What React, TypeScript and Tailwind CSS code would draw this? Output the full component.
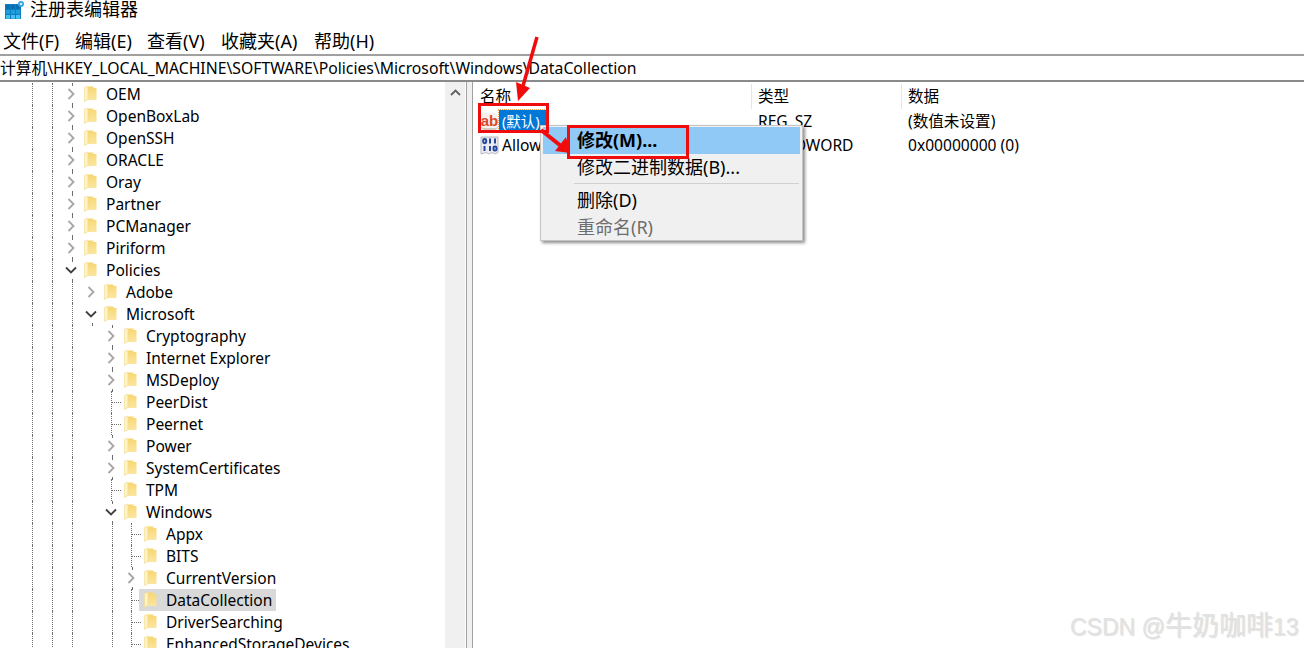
import React from 'react';

type Kind = 'closed' | 'open' | 'leaf';
type Node = { name: string; depth: number; kind: Kind; selected?: boolean };

const font = { fontFamily: '"Noto Sans", "Noto Sans CJK SC", sans-serif' };

const nodes: Node[] = [
  { name: 'OEM', depth: 0, kind: 'closed' },
  { name: 'OpenBoxLab', depth: 0, kind: 'closed' },
  { name: 'OpenSSH', depth: 0, kind: 'closed' },
  { name: 'ORACLE', depth: 0, kind: 'closed' },
  { name: 'Oray', depth: 0, kind: 'closed' },
  { name: 'Partner', depth: 0, kind: 'closed' },
  { name: 'PCManager', depth: 0, kind: 'closed' },
  { name: 'Piriform', depth: 0, kind: 'closed' },
  { name: 'Policies', depth: 0, kind: 'open' },
  { name: 'Adobe', depth: 1, kind: 'closed' },
  { name: 'Microsoft', depth: 1, kind: 'open' },
  { name: 'Cryptography', depth: 2, kind: 'closed' },
  { name: 'Internet Explorer', depth: 2, kind: 'closed' },
  { name: 'MSDeploy', depth: 2, kind: 'closed' },
  { name: 'PeerDist', depth: 2, kind: 'leaf' },
  { name: 'Peernet', depth: 2, kind: 'leaf' },
  { name: 'Power', depth: 2, kind: 'closed' },
  { name: 'SystemCertificates', depth: 2, kind: 'closed' },
  { name: 'TPM', depth: 2, kind: 'leaf' },
  { name: 'Windows', depth: 2, kind: 'open' },
  { name: 'Appx', depth: 3, kind: 'leaf' },
  { name: 'BITS', depth: 3, kind: 'leaf' },
  { name: 'CurrentVersion', depth: 3, kind: 'closed' },
  { name: 'DataCollection', depth: 3, kind: 'leaf', selected: true },
  { name: 'DriverSearching', depth: 3, kind: 'leaf' },
  { name: 'EnhancedStorageDevices', depth: 3, kind: 'leaf' },
];

const Folder = () => (
  <svg width="13" height="18" viewBox="0 0 13 18" className="shrink-0">
    <defs>
      <linearGradient id="fold" x1="0" y1="0" x2="0" y2="1">
        <stop offset="0" stopColor="#f7d672" />
        <stop offset="1" stopColor="#fbe6a2" />
      </linearGradient>
    </defs>
    <path d="M4 1.5h5.5v1.5H12.5v12H4z" fill="url(#fold)" />
    <path d="M0.5 2.5L4 1v13.5L0.5 16.5z" fill="#fdf3c4" stroke="#f2d98c" strokeWidth="0.6" />
  </svg>
);

const Chevron = ({ open }: { open: boolean }) =>
  open ? (
    <svg width="12" height="8" viewBox="0 0 12 8" className="shrink-0 mr-[2px]">
      <path d="M1 1.5l5 5 5-5" fill="none" stroke="#404040" strokeWidth="1.8" />
    </svg>
  ) : (
    <svg width="8" height="12" viewBox="0 0 8 12" className="shrink-0 mr-[2px]">
      <path d="M1.5 1l5 5-5 5" fill="none" stroke="#a6a6a6" strokeWidth="1.8" />
    </svg>
  );

const Guide = ({ on }: { on: boolean }) => (
  <div className="w-5 h-full flex justify-center shrink-0">
    {on && <div className="h-full border-l border-dotted border-[#6e6e6e]" />}
  </div>
);

const Connector = ({ node, guide }: { node: Node; guide: boolean }) => {
  if (node.kind === 'leaf') {
    return (
      <div className="w-5 h-full flex shrink-0 items-center">
        <div className="w-[10px] h-full border-r border-dotted border-[#6e6e6e]" />
        <div className="w-[9px] border-t border-dotted border-[#6e6e6e]" />
      </div>
    );
  }
  return (
    <div className="w-5 h-full flex flex-col items-center justify-between shrink-0">
      <div className={`h-[2px] ${guide ? 'border-l border-dotted border-[#6e6e6e]' : ''}`} />
      <Chevron open={node.kind === 'open'} />
      <div className={`h-[2px] ${guide || node.kind === 'open' ? 'border-l border-dotted border-[#6e6e6e]' : ''}`} />
    </div>
  );
};

const TreeRow = ({ node }: { node: Node }) => {
  // guide columns: 32, 52 always, 72 once inside Policies, 112 for Microsoft's children
  const extra: boolean[] = [];
  if (node.depth >= 1) extra.push(true);
  if (node.depth >= 2) extra.push(false);
  if (node.depth >= 3) extra.push(true);
  return (
    <div className="flex items-center h-[22px] pl-[22px]">
      <Guide on />
      <Guide on />
      {extra.map((on, i) => (
        <Guide key={i} on={on} />
      ))}
      <Connector node={node} guide={node.depth !== 1} />
      <div
        className={`flex items-center h-[22px] -ml-[3px] pl-[5px] pr-1 ${node.selected ? 'bg-[#d9d9d9]' : ''}`}
      >
        <Folder />
        <span className="ml-[9px] pt-[2px] text-[15.5px] text-[#000] whitespace-nowrap">{node.name}</span>
      </div>
    </div>
  );
};

const RegIcon = () => (
  <svg width="21" height="19" viewBox="0 0 21 19" className="shrink-0">
    <rect x="0" y="3" width="16" height="15" fill="#0e7fc0" />
    {[4, 9, 14].map((y) =>
      [1, 6, 11].map((x) => (
        <rect key={`${x}-${y}`} x={x} y={y} width="4" height="3.8" fill={y === 14 ? '#45c0f2' : y === 9 ? '#1f9ede' : '#0a6fb0'} />
      ))
    )}
    <circle cx="16" cy="3" r="3" fill="#3ba7e0" />
    <circle cx="16" cy="3" r="1.1" fill="#ffffff" />
  </svg>
);

const StringIcon = () => (
  <div className="w-[17px] h-[17px] shrink-0 bg-[#f6f1ea] border-b-2 border-[#cfcac2] rounded-sm flex items-center justify-center overflow-hidden">
    <span className="text-[15px] font-bold leading-none text-[#d8492c]" style={{ fontFamily: '"Liberation Sans", sans-serif' }}>
      ab
    </span>
  </div>
);

const BinaryIcon = () => (
  <svg width="19" height="19" viewBox="0 0 19 19" className="shrink-0">
    <path d="M1 1h17v15.5l-3 1.5-3-1.5-3 1.5-3-1.5-5 1.5z" fill="#ebebf1" stroke="#a8a8b4" strokeWidth="0.8" />
    <g fill="none" stroke="#24489c" strokeWidth="2">
      <rect x="3.2" y="3" width="3" height="4.2" rx="1.4" />
      <path d="M10 2.6v5M15 2.6v5" />
      <path d="M4.5 10v5M10 10v5" />
      <rect x="13.5" y="10.4" width="3" height="4.2" rx="1.4" />
    </g>
  </svg>
);

const menuBar = [
  { label: '文件(F)', w: 'w-[72px]' },
  { label: '编辑(E)', w: 'w-[72px]' },
  { label: '查看(V)', w: 'w-[74px]' },
  { label: '收藏夹(A)', w: 'w-[93px]' },
  { label: '帮助(H)', w: 'w-auto' },
];

const ContextMenu = () => (
  <div className="absolute left-[540px] top-[125px] w-[263px] h-[116px] bg-[#f0f0f0] border border-[#c4c4c4] shadow-[2px_2px_3px_rgba(0,0,0,0.45)] pt-px px-[2px] text-[18px] text-black">
    <div className="h-[27px] bg-[#90c8f6] flex items-center pl-[34px] font-bold">修改(M)...</div>
    <div className="h-[27px] flex items-center pl-[34px]">修改二进制数据(B)...</div>
    <div className="h-px bg-[#d0d0d0] mt-[2px] mb-[3px] ml-[31px] mr-px" />
    <div className="h-[27px] flex items-center pl-[34px]">删除(D)</div>
    <div className="h-[27px] flex items-center pl-[34px] text-[#6d6d6d]">重命名(R)</div>
  </div>
);

const Arrows = () => (
  <svg width="1304" height="648" viewBox="0 0 1304 648" className="absolute left-0 top-0 pointer-events-none">
    <path d="M537 37L523 86" stroke="#f00c0c" strokeWidth="3.5" fill="none" />
    <path d="M516 82L530 88L518 101z" fill="#f00c0c" />
    <path d="M541 130L561 146" stroke="#f00c0c" strokeWidth="4" fill="none" />
    <path d="M566 137L570 153L555 151z" fill="#f00c0c" />
  </svg>
);

export default function App() {
  return (
    <div className="relative w-[1304px] h-[648px] overflow-hidden bg-white flex flex-col" style={font}>
      <div className="h-[21px] flex items-center pl-[5px] shrink-0">
        <RegIcon />
        <span className="ml-[4px] pb-[3px] text-[18px] leading-none text-black">注册表编辑器</span>
      </div>
      <div className="h-[35px] flex items-center pl-[3px] pt-2 shrink-0 text-[18px] text-black border-b-2 border-[#a0a0a0]">
        {menuBar.map((m) => (
          <span key={m.label} className={`${m.w} whitespace-nowrap`}>
            {m.label}
          </span>
        ))}
      </div>
      <div className="h-[26px] flex items-center pt-[2px] shrink-0 text-[15.75px] text-black border-b-2 border-[#8a8a8a] whitespace-nowrap">
        计算机\HKEY_LOCAL_MACHINE\SOFTWARE\Policies\Microsoft\Windows\DataCollection
      </div>

      <div className="flex-1 flex min-h-0">
        <div className="w-[445px] shrink-0 overflow-hidden pt-px">
          {nodes.map((n) => (
            <TreeRow key={n.name} node={n} />
          ))}
        </div>
        <div className="w-[20px] shrink-0 bg-[#f0f0f0] flex justify-center pt-[7px]">
          <svg width="11" height="7" viewBox="0 0 11 7">
            <path d="M1 6l4.5-4.5L10 6" fill="none" stroke="#606060" strokeWidth="1.8" />
          </svg>
        </div>
        <div className="w-[1px] shrink-0" />
        <div className="w-[7px] shrink-0 bg-[#f0f0f0] border-l border-r border-[#a0a0a0]" />

        <div className="flex-1 text-[15.6px] text-black">
          <div className="h-[27px] flex pt-[2px]">
            <div className="w-[279px] pl-[7px] flex items-center border-r border-[#e5e5e5]">名称</div>
            <div className="w-[150px] pl-[6px] flex items-center border-r border-[#e5e5e5]">类型</div>
            <div className="pl-[6px] flex items-center">数据</div>
          </div>
          <div className="h-[24px] flex items-center">
            <div className="w-[279px] pl-[8px] flex items-center">
              <StringIcon />
              <span className="h-[22px] ml-px pl-[3px] pr-[6px] pt-[2px] bg-[#0078d7] text-white text-[14.5px] flex items-center outline-1 outline-dotted outline-[#f0a050]">
                (默认)
              </span>
            </div>
            <div className="w-[150px] pl-[6px] pt-[2px]">REG_SZ</div>
            <div className="pl-[6px] pt-[2px]">(数值未设置)</div>
          </div>
          <div className="h-[24px] flex items-center">
            <div className="w-[279px] pl-[7px] flex items-center">
              <BinaryIcon />
              <span className="ml-[3px] pt-[2px]">AllowTelemetry</span>
            </div>
            <div className="w-[150px] pl-[6px] pt-[2px]">REG_DWORD</div>
            <div className="pl-[6px] pt-[2px]">0x00000000 (0)</div>
          </div>
        </div>
      </div>

      <ContextMenu />
      <div className="absolute left-[478px] top-[103px] w-[71px] h-[30px] border-[3px] border-[#f00c0c]" />
      <div className="absolute left-[567px] top-[125px] w-[122px] h-[34px] border-[3px] border-[#f00c0c]" />
      <Arrows />

      <div
        className="absolute left-[1070px] top-[609px] text-[23px] leading-[34px] text-[#e2e2e2] whitespace-nowrap [text-shadow:1px_1px_1px_rgba(150,150,150,0.3)]"
        style={{ fontFamily: '"Liberation Sans", "Noto Sans CJK SC", sans-serif' }}
      >
        CSDN @<span className="text-[27px]">牛奶咖啡</span>13
      </div>
    </div>
  );
}
